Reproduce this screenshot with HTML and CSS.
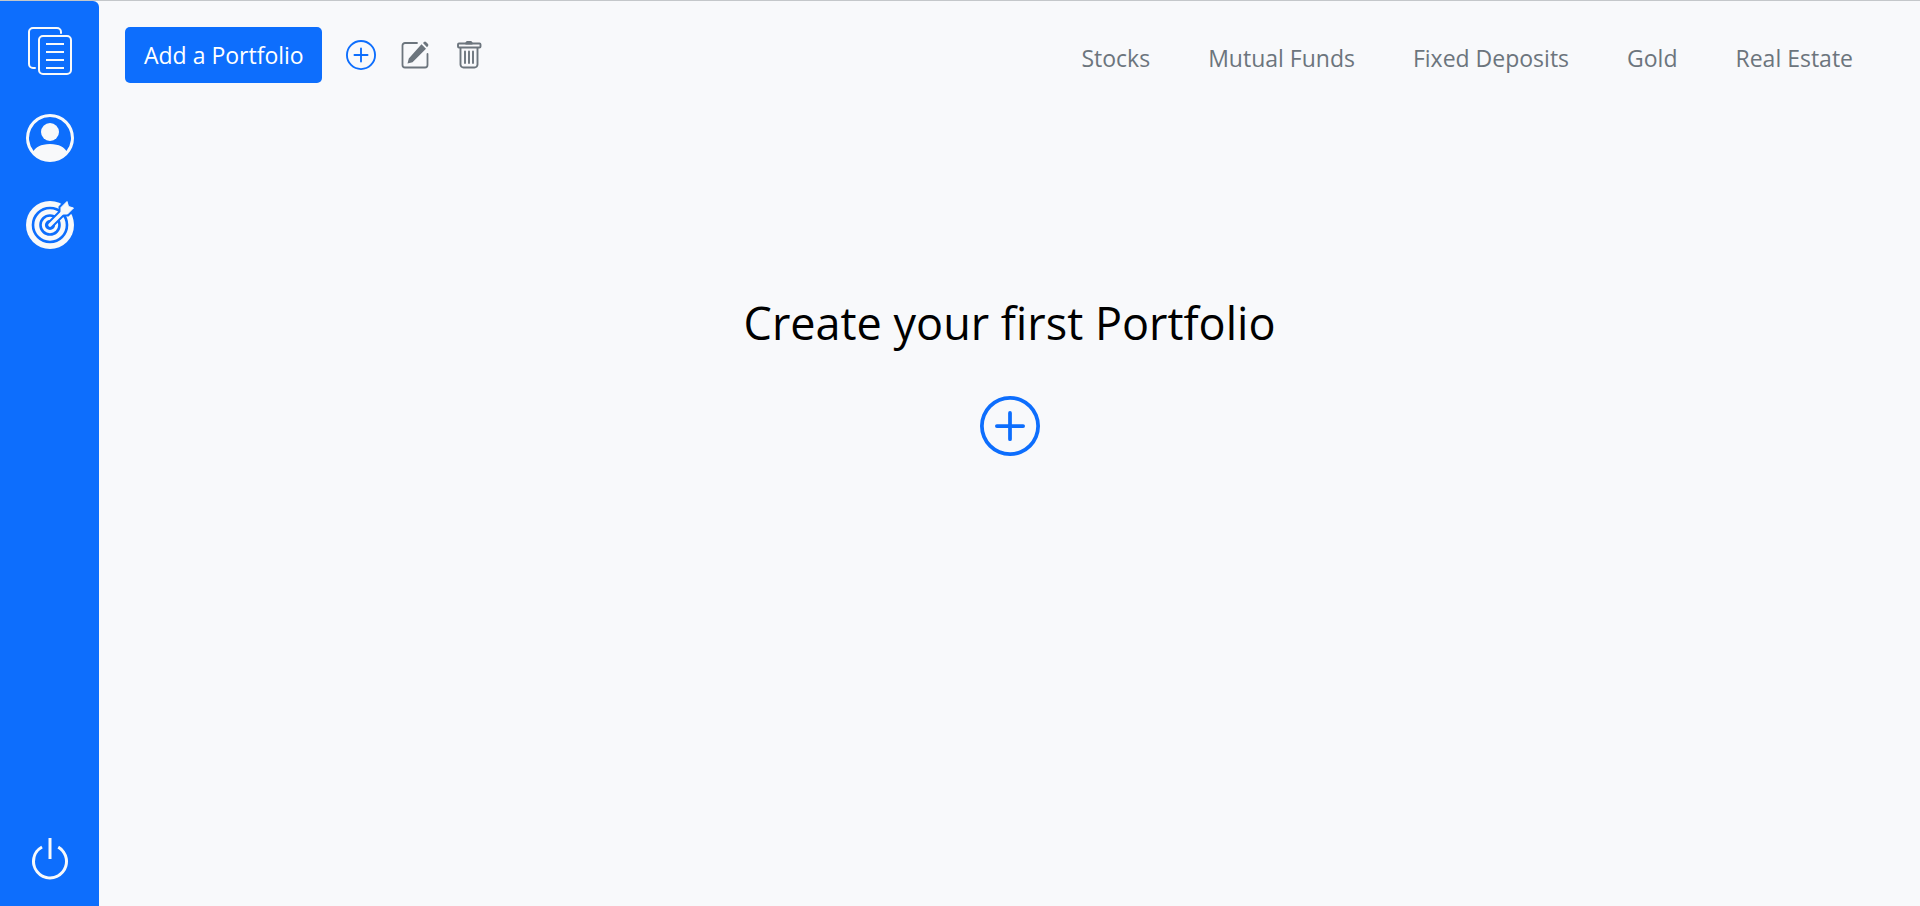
FILE: index.html
```html
<!DOCTYPE html>
<html lang="en">
<head>
<meta charset="utf-8">
<meta name="viewport" content="width=device-width, initial-scale=1">
<title>Portfolio</title>
<link rel="stylesheet" href="styles.css">
</head>
<body>
<div class="app">
  <aside class="sidebar">
    <nav class="sidebar-links" aria-label="Sections">
      <a class="side-link" href="#portfolios" aria-label="Portfolios">
        <svg class="icon-large" viewBox="0 0 48 48" fill="none" stroke="currentColor" stroke-width="2" stroke-linecap="round">
          <path d="M35 6V5a4 4 0 0 0-4-4H7a4 4 0 0 0-4 4v32a4 4 0 0 0 4 4h2"/>
          <rect x="13" y="9" width="32" height="38" rx="4"/>
          <path d="M20 17h18M20 25h18M20 33h18M20 41h18" stroke-linecap="butt"/>
        </svg>
      </a>
      <a class="side-link" href="#profile" aria-label="Profile">
        <svg class="icon-large" viewBox="0 0 16 16" fill="currentColor">
          <path d="M11 6a3 3 0 1 1-6 0 3 3 0 0 1 6 0"/>
          <path fill-rule="evenodd" d="M0 8a8 8 0 1 1 16 0A8 8 0 0 1 0 8m8-7a7 7 0 0 0-5.468 11.37C3.242 11.226 4.805 10 8 10s4.757 1.225 5.468 2.37A7 7 0 0 0 8 1"/>
        </svg>
      </a>
      <a class="side-link" href="#goals" aria-label="Goals">
        <svg class="icon-large" viewBox="0 0 48 48">
          <circle cx="24" cy="24" r="24" fill="currentColor"/>
          <g class="ring" fill="none" stroke-width="2.600">
            <circle cx="24" cy="24" r="17"/>
            <circle cx="24" cy="24" r="9.500"/>
            <circle cx="24" cy="24" r="4" stroke-width="2.200"/>
          </g>
          <path class="arrow" d="M24 24 37 11" fill="none" stroke-width="7.500" stroke-linecap="round"/>
          <path class="arrow" d="M35 6.500 41 .500l1.500 5 5 1.500-6 6H35z" stroke-width="5"/>
          <path d="M24 24 37 11" fill="none" stroke="currentColor" stroke-width="3.600" stroke-linecap="round"/>
          <path d="M35 6.500 41 .500l1.500 5 5 1.500-6 6H35z" fill="currentColor" stroke="currentColor" stroke-linejoin="round"/>
        </svg>
      </a>
    </nav>
    <button class="side-link" type="button" aria-label="Log out">
      <svg class="icon-large" viewBox="0 0 16 16" fill="currentColor">
        <path d="M7.5 1v7h1V1z"/>
        <path d="M3 8.812a5 5 0 0 1 2.578-4.375l-.485-.874A6 6 0 1 0 11 3.616l-.501.865A5 5 0 1 1 3 8.812"/>
      </svg>
    </button>
  </aside>
  <div class="content">
    <header class="topbar">
      <div class="actions">
        <button class="add-button" type="button">Add a Portfolio</button>
        <button class="icon-button accent" type="button" aria-label="Add">
          <svg class="icon-small" viewBox="0 0 16 16" fill="currentColor">
            <path d="M8 15A7 7 0 1 1 8 1a7 7 0 0 1 0 14m0 1A8 8 0 1 0 8 0a8 8 0 0 0 0 16"/>
            <path d="M8 4a.5.5 0 0 1 .5.5v3h3a.5.5 0 0 1 0 1h-3v3a.5.5 0 0 1-1 0v-3h-3a.5.5 0 0 1 0-1h3v-3A.5.5 0 0 1 8 4"/>
          </svg>
        </button>
        <button class="icon-button" type="button" aria-label="Edit">
          <svg class="icon-small" viewBox="-1 -1 30 30">
            <path d="M16 2H4a2.500 2.500 0 0 0-2.500 2.500V24A2.500 2.500 0 0 0 4 26.500h20a2.500 2.500 0 0 0 2.500-2.500V13" fill="none" stroke="currentColor" stroke-width="1.800" stroke-linecap="round"/>
            <path d="m20.500 3.200 4.500 4.500-13.500 13.500-5 1.300 1.300-5zM22 2l1-1q1-.8 2 0l2 2q.8 1 0 2l-1 1.200z" fill="currentColor"/>
          </svg>
        </button>
        <button class="icon-button" type="button" aria-label="Delete">
          <svg class="icon-small" viewBox="-1 -1 30 30" fill="none" stroke="currentColor" stroke-width="1.900" stroke-linecap="round" stroke-linejoin="round">
            <rect x="3" y="2.500" width="22.500" height="4" rx="1"/>
            <path d="M11 2.500 12 1h4l1 1.500z" fill="currentColor"/>
            <path d="M5.500 7v16.500a3 3 0 0 0 3 3h11a3 3 0 0 0 3-3V7M10 10.500v11.500M14 10.500v11.500M18 10.500v11.500"/>
          </svg>
        </button>
      </div>
      <nav class="asset-nav" aria-label="Assets">
        <a href="#stocks">Stocks</a>
        <a href="#mutual-funds">Mutual Funds</a>
        <a href="#fixed-deposits">Fixed Deposits</a>
        <a href="#gold">Gold</a>
        <a href="#real-estate">Real Estate</a>
      </nav>
    </header>
    <main class="empty-state">
      <h1>Create your first Portfolio</h1>
      <button class="icon-button accent" type="button" aria-label="Create portfolio">
        <svg class="icon-hero" viewBox="0 0 16 16" fill="currentColor">
          <path d="M8 15A7 7 0 1 1 8 1a7 7 0 0 1 0 14m0 1A8 8 0 1 0 8 0a8 8 0 0 0 0 16"/>
          <path d="M8 4a.5.5 0 0 1 .5.5v3h3a.5.5 0 0 1 0 1h-3v3a.5.5 0 0 1-1 0v-3h-3a.5.5 0 0 1 0-1h3v-3A.5.5 0 0 1 8 4"/>
        </svg>
      </button>
    </main>
  </div>
</div>
</body>
</html>
```
FILE: styles.css
```css
:root {
  --blue: #0d6efd;
  --gray: #6c757d;
  --light: #f8f9fa;
}

* {
  box-sizing: border-box;
}

body {
  margin: 0;
  background: #f8f9fb;
  font-family: "Segoe UI", "Open Sans", "Noto Sans", sans-serif;
  font-size: 23px;
  line-height: 36px;
}

button {
  border: 0;
  padding: 0;
  background: none;
  color: inherit;
  font: inherit;
  cursor: pointer;
}

svg {
  display: block;
}

.app {
  display: flex;
  min-height: 100vh;
  border-top: 1px solid #c4c7ca;
}

.sidebar {
  display: flex;
  flex-direction: column;
  justify-content: space-between;
  align-items: center;
  padding: 26px 25px 23px 26px;
  border-top-right-radius: 6px;
  background: var(--blue);
  color: var(--light);
}

.sidebar-links {
  display: flex;
  flex-direction: column;
  gap: 39px;
}

.side-link {
  color: inherit;
}

.icon-large {
  width: 48px;
  height: 48px;
}

.ring,
.arrow {
  stroke: var(--blue);
}

.content {
  flex: 1;
}

.topbar {
  display: flex;
  justify-content: space-between;
  align-items: center;
  padding: 26px 67px 0 26px;
}

.actions {
  display: flex;
  align-items: center;
  gap: 24px;
}

.add-button {
  padding: 10px 18px 10px 19px;
  border-radius: 5px;
  background: var(--blue);
  color: #fff;
}

.icon-button {
  color: var(--gray);
}

.accent {
  color: var(--blue);
}

.icon-small {
  width: 30px;
  height: 30px;
}

.asset-nav {
  display: flex;
  gap: 58px;
  padding-top: 6px;
}

.asset-nav a {
  color: var(--gray);
  text-decoration: none;
}

.empty-state {
  display: flex;
  flex-direction: column;
  align-items: center;
  gap: 37px;
  padding-top: 204px;
}

.empty-state h1 {
  margin: 0;
  color: #000;
  font-size: 45px;
  font-weight: 400;
  line-height: 72px;
}

.icon-hero {
  width: 60px;
  height: 60px;
}
```
